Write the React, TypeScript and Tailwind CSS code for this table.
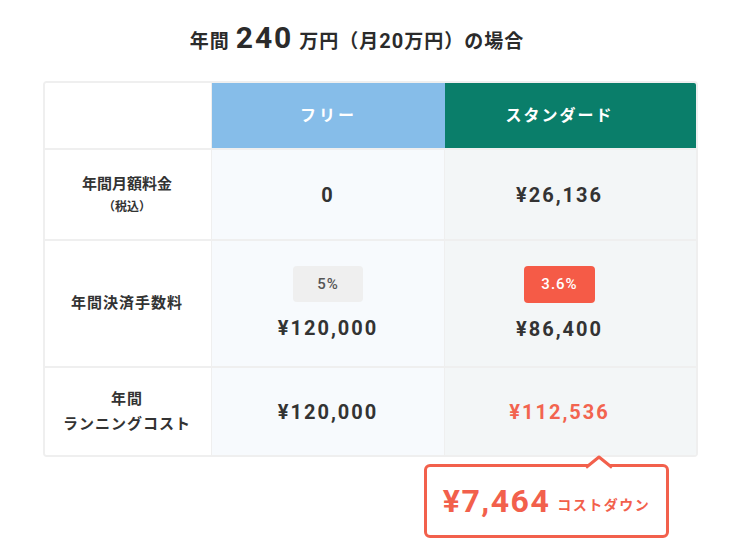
import { FC, ReactNode } from 'react';

const font = { fontFamily: "Roboto, 'Noto Sans CJK JP', sans-serif" };

const Cell: FC<{ className?: string; children?: ReactNode }> = ({ className = '', children }) => (
  <div className={`flex flex-col items-center justify-center ${className}`}>{children}</div>
);

const App: FC = () => {
  return (
    <div className="w-[730px] h-[551px] bg-white text-[#333] overflow-hidden" style={font}>
      <h1 className="flex items-baseline justify-center pt-[23px] pr-[16px] font-bold text-[#2b2b2b] leading-none">
        <span className="text-[19px] tracking-[1px]">年間</span>
        <span className="text-[30px] tracking-[2px] mx-[6px]">240</span>
        <span className="text-[19px] tracking-[1px]">万円（月</span>
        <span className="text-[20px] tracking-[1px]">20</span>
        <span className="text-[19px] tracking-[1px]">万円）の場合</span>
      </h1>

      <div className="ml-[43px] mt-[28px] w-[655px]">
        <div className="grid grid-cols-[167px_233px_255px] border-2 border-[#efefef] rounded-[4px] overflow-hidden">
          {/* header */}
          <div className="h-[65px] bg-white border-r border-[#eee]" />
          <Cell className="h-[65px] bg-[#86bde9] text-white font-bold text-[16px] tracking-[3px]">フリー</Cell>
          <Cell className="h-[65px] bg-[#0a7e6a] text-white font-bold text-[16px] tracking-[2px] rounded-tr-[4px] pr-[26px]">スタンダード</Cell>

          {/* row 1 */}
          <Cell className="h-[91px] bg-white border-t-2 border-[#efefef] border-r font-bold text-[15px] leading-[25px] pr-[2px]">
            <span>年間月額料金</span>
            <span className="text-[12px] leading-[20px]">（税込）</span>
          </Cell>
          <Cell className="h-[91px] bg-[#f7fafd] border-t-2 border-[#efefef] border-r font-bold text-[20px] tracking-[2px]">0</Cell>
          <Cell className="h-[91px] bg-[#f3f6f7] border-t-2 border-[#efefef] font-bold text-[20px] tracking-[2px] pr-[26px]">¥26,136</Cell>

          {/* row 2 */}
          <Cell className="h-[127px] bg-white border-t-2 border-[#efefef] border-r font-bold text-[15px] tracking-[1px] pr-[2px]">
            年間決済手数料
          </Cell>
          <Cell className="h-[127px] bg-[#f7fafd] border-t-2 border-[#efefef] border-r gap-[11px] pt-[2px]">
            <span className="w-[70px] h-[36px] rounded-[4px] bg-[#efefef] flex items-center justify-center text-[15px] font-medium text-[#555] tracking-[1px]">5%</span>
            <span className="font-bold text-[20px] tracking-[2px]">¥120,000</span>
          </Cell>
          <Cell className="h-[127px] bg-[#f3f6f7] border-t-2 border-[#efefef] gap-[11px] pt-[2px] pr-[26px]">
            <span className="w-[71px] h-[37px] rounded-[4px] bg-[#f55b47] flex items-center justify-center text-[15px] font-medium text-white tracking-[1px]">3.6%</span>
            <span className="font-bold text-[20px] tracking-[2px]">¥86,400</span>
          </Cell>

          {/* row 3 */}
          <Cell className="h-[89px] bg-white border-t-2 border-[#efefef] border-r font-bold text-[15px] leading-[25px] tracking-[1px] pr-[2px]">
            <span>年間</span>
            <span>ランニングコスト</span>
          </Cell>
          <Cell className="h-[89px] bg-[#f7fafd] border-t-2 border-[#efefef] border-r font-bold text-[20px] tracking-[2px]">¥120,000</Cell>
          <Cell className="h-[89px] bg-[#f3f6f7] border-t-2 border-[#efefef] font-bold text-[20px] tracking-[2px] text-[#f2644f] pr-[26px]">¥112,536</Cell>
        </div>

        <div className="relative ml-[381px] mt-[7px] w-[245px] h-[74px] border-[3px] border-[#f2604c] rounded-[6px] bg-white flex items-center justify-center gap-[7px] text-[#f2604c] font-bold">
          <svg className="absolute -top-[12px] left-[158px]" width="28" height="14" viewBox="0 0 28 14">
            <path d="M0 12.5 L14 1.5 L28 12.5 L28 14 L0 14 Z" fill="white" />
            <path d="M1 12.5 L14 2 L27 12.5" fill="none" stroke="#f2604c" strokeWidth="3" strokeLinejoin="round" />
          </svg>
          <span className="text-[32px] tracking-[1.5px] leading-none">¥7,464</span>
          <span className="text-[14px] tracking-[1.5px] mt-[8px]">コストダウン</span>
        </div>
      </div>
    </div>
  );
};

export default App;
